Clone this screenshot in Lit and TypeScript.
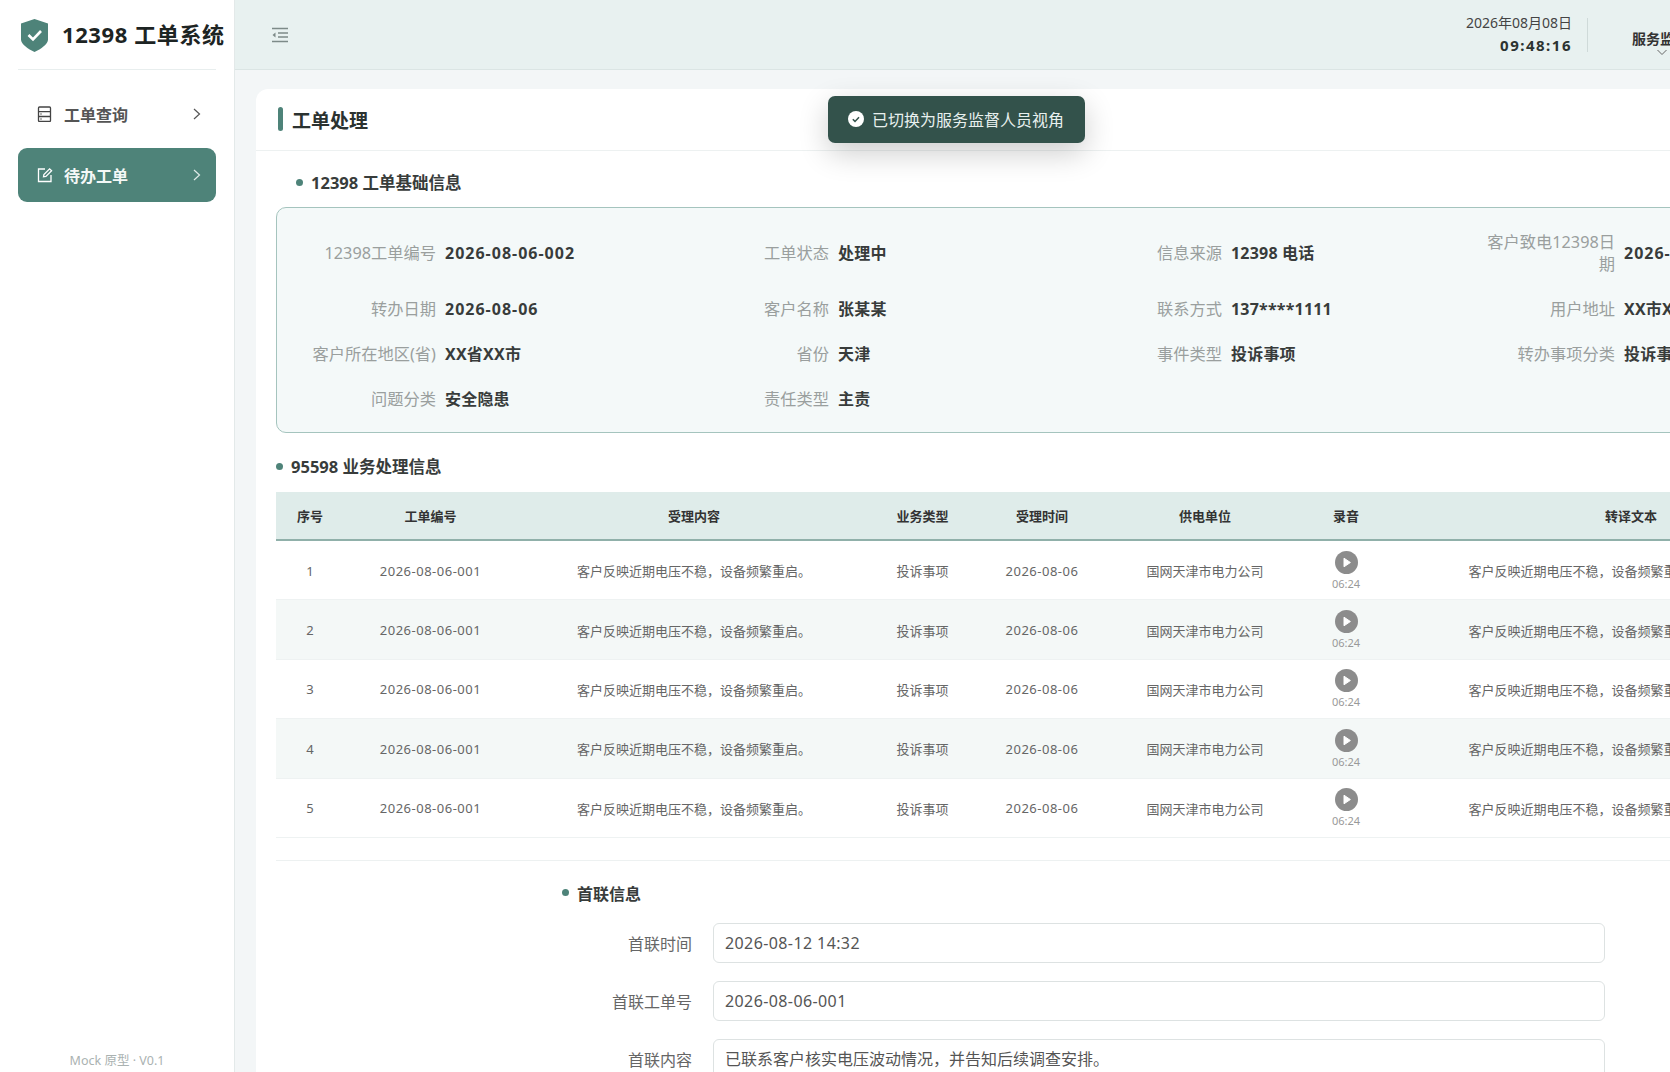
import { LitElement, html, css } from 'lit';
import { customElement } from 'lit/decorators.js';

const info = [
  ['12398工单编号', '2026-08-06-002'],
  ['工单状态', '处理中'],
  ['信息来源', '12398 电话'],
  ['客户致电12398日期', '2026-08-06'],
  ['转办日期', '2026-08-06'],
  ['客户名称', '张某某'],
  ['联系方式', '137****1111'],
  ['用户地址', 'XX市XX区XX路'],
  ['客户所在地区(省)', 'XX省XX市'],
  ['省份', '天津'],
  ['事件类型', '投诉事项'],
  ['转办事项分类', '投诉事项'],
  ['问题分类', '安全隐患'],
  ['责任类型', '主责'],
];

const columns = [
  ['序号', 68],
  ['工单编号', 173],
  ['受理内容', 354],
  ['业务类型', 103],
  ['受理时间', 136],
  ['供电单位', 190],
  ['录音', 92],
  ['转译文本', 478],
] as const;

const fields = [
  ['首联时间', '2026-08-12 14:32'],
  ['首联工单号', '2026-08-06-001'],
  ['首联内容', '已联系客户核实电压波动情况\uff0c并告知后续调查安排。'],
];

// date-like values run a little wider than the font gives
const isDate = (v: string) => /^[\d\- :]+$/.test(v);

@customElement('app-root')
export default class AppRoot extends LitElement {
  static override styles = css`
    :host {
      display: block;
      width: 1670px;
      height: 1072px;
      overflow: hidden;
      font-family: 'Noto Sans', 'Noto Sans CJK SC', sans-serif;
      color: #333;
    }
    .app {
      position: relative;
      display: flex;
      width: 1670px;
      height: 1072px;
      overflow: hidden;
      background: #f3f6f7;
    }

    .side {
      flex: none;
      box-sizing: border-box;
      display: flex;
      flex-direction: column;
      width: 235px;
      height: 1072px;
      padding: 0 18px;
      background: #fff;
      border-right: 1px solid #e3e9e9;
    }
    .brand {
      flex: none;
      display: flex;
      align-items: center;
      gap: 14px;
      height: 70px;
      margin-bottom: 18px;
      padding: 0 0 3px 3px;
      box-sizing: border-box;
      border-bottom: 1px solid #e8eeee;
      white-space: nowrap;
      font-size: 22px;
      letter-spacing: 0.6px;
      font-weight: 700;
      color: #1d2423;
    }
    .brand svg {
      flex: none;
      margin-top: 4px;
    }
    .nav {
      display: flex;
      align-items: center;
      height: 54px;
      margin-bottom: 6px;
      padding: 0 13px 2px 19px;
      box-sizing: border-box;
      border-radius: 9px;
      font-size: 16px;
      font-weight: 700;
      color: #555;
    }
    .nav.on {
      background: #4e8379;
      color: #f4f8f7;
      padding-bottom: 0;
    }
    .nav span {
      flex: 1;
      margin-left: 12px;
    }
    .nav.on span {
      margin-left: 11px;
    }
    .foot {
      margin-top: auto;
      padding-bottom: 2px;
      height: 20px;
      text-align: center;
      font-size: 12.5px;
      color: #aab2b1;
    }

    .main {
      flex: none;
      width: 1699px;
    }
    .top {
      box-sizing: border-box;
      display: flex;
      align-items: center;
      height: 70px;
      padding: 0 242px 0 36px;
      background: #e8f1f0;
      border-bottom: 1px solid #dbe5e4;
    }
    .clock {
      margin-left: auto;
      padding-bottom: 2px;
      text-align: right;
      font-size: 14px;
      line-height: 22px;
      color: #444;
    }
    .clock b {
      display: block;
      font-size: 15px;
      letter-spacing: 1.5px;
      color: #2c3331;
    }
    .sep {
      width: 1px;
      height: 34px;
      margin: 0 44px 0 15px;
      background: #cfdad9;
    }
    .user {
      width: 60px;
      padding-top: 16px;
      white-space: nowrap;
      font-size: 14px;
      line-height: 20px;
      font-weight: 700;
      color: #333;
    }
    .user svg {
      display: block;
      margin: 0 auto;
    }

    .card {
      margin: 19px 21px 0;
      background: #fff;
      border-radius: 12px 12px 0 0;
    }
    .card-head {
      display: flex;
      align-items: center;
      gap: 9px;
      height: 62px;
      padding: 0 22px;
      box-sizing: border-box;
      border-bottom: 1px solid #edf1f1;
      font-size: 19px;
      font-weight: 700;
      color: #2b3230;
    }
    .card-head i {
      width: 5px;
      height: 24px;
      margin-bottom: 2px;
      border-radius: 3px;
      background: #4e8379;
    }
    .card-body {
      padding: 18px 20px 0;
    }

    .sec {
      display: flex;
      align-items: center;
      gap: 8px;
      height: 26px;
      font-size: 16.5px;
      font-weight: 700;
      color: #383c3b;
    }
    .sec i {
      width: 7px;
      height: 7px;
      border-radius: 50%;
      background: #4e8379;
    }
    .sec.first {
      padding-left: 20px;
      margin-bottom: 12px;
    }
    .sec.second {
      margin: 20px 0 13px;
    }

    .box {
      box-sizing: border-box;
      display: grid;
      grid-template-columns: repeat(4, 393px);
      row-gap: 23px;
      align-items: center;
      height: 226px;
      padding: 23px 0 22px 28px;
      border: 1px solid #a5c4be;
      border-radius: 10px;
      background: #f4f9f9;
    }
    .kv {
      display: flex;
      align-items: center;
      gap: 9px;
      font-size: 16px;
      line-height: 22px;
    }
    .kv label {
      flex: none;
      width: 131px;
      text-align: right;
      font-size: 16.25px;
      color: #9a9f9e;
    }
    .kv b {
      white-space: nowrap;
      letter-spacing: 0.2px;
      color: #383c3b;
    }
    .kv b.num {
      letter-spacing: 1px;
    }

    table {
      width: 1594px;
      table-layout: fixed;
      border-collapse: collapse;
      font-size: 13px;
    }
    th {
      height: 47px;
      padding: 0;
      background: #dfecea;
      border-bottom: 2px solid #90b0aa;
      font-weight: 700;
      color: #333;
    }
    td {
      height: 57.4px;
      padding: 1px 0 0;
      text-align: center;
      white-space: nowrap;
      color: #666;
      border-bottom: 1px solid #eef2f2;
    }
    td .num {
      letter-spacing: 0.5px;
    }
    tr:nth-child(even) td {
      background: #f4f8f7;
    }
    .play {
      display: block;
      margin: 0 auto;
    }
    .dur {
      display: block;
      margin-top: 3px;
      padding-bottom: 1px;
      font-size: 11px;
      line-height: 13px;
      color: #999;
    }

    .rule {
      height: 1px;
      margin-top: 22px;
      background: #edf1f1;
    }
    .form {
      width: 1041px;
      margin: 19px auto 0;
    }
    .form .sec {
      margin: 0 0 17px -2px;
      font-size: 16px;
    }
    .row {
      display: flex;
      align-items: center;
      gap: 21px;
      margin-bottom: 18px;
    }
    .row label {
      flex: none;
      width: 128px;
      text-align: right;
      font-size: 16px;
      color: #666;
    }
    .input {
      box-sizing: border-box;
      flex: 1;
      height: 40px;
      padding: 0 11px;
      border: 1.5px solid #dde2e2;
      border-radius: 6px;
      background: #fff;
      font-size: 16px;
      line-height: 38px;
      color: #555;
    }
    .input.num {
      letter-spacing: 0.4px;
    }

    .toast {
      position: absolute;
      left: 828px;
      top: 96px;
      box-sizing: border-box;
      display: flex;
      align-items: center;
      gap: 8px;
      width: 257px;
      height: 47px;
      padding: 0 0 1px 20px;
      border-radius: 7px;
      background: #33524b;
      box-shadow: 0 10px 30px rgba(0, 0, 0, 0.2);
      font-size: 16px;
      color: #e8f0ee;
      white-space: nowrap;
    }
  `;

  private chevron(color: string) {
    return html`<svg width="12" height="14" viewBox="0 0 12 14" fill="none" stroke=${color} stroke-width="1.2">
      <path d="M3 2l5.5 5L3 12" />
    </svg>`;
  }

  private renderCell(i: number, rowIndex: number) {
    if (i === 0) return html`${rowIndex + 1}`;
    if (i === 1) return html`<span class="num">2026-08-06-001</span>`;
    if (i === 2) return '客户反映近期电压不稳\uff0c设备频繁重启。';
    if (i === 3) return '投诉事项';
    if (i === 4) return html`<span class="num">2026-08-06</span>`;
    if (i === 5) return '国网天津市电力公司';
    if (i === 6) {
      return html`<svg class="play" width="23" height="23" viewBox="0 0 23 23">
          <circle cx="11.5" cy="11.5" r="11.5" fill="#8c8c8c" />
          <path d="M9 7.2l6.4 4.3L9 15.8z" fill="#fff" stroke="#fff" stroke-width="1" stroke-linejoin="round" />
        </svg>
        <span class="dur">06:24</span>`;
    }
    return '客户反映近期电压不稳\uff0c设备频繁重启\uff0c请求尽快排查。';
  }

  override render() {
    return html`
      <div class="app">
        <aside class="side">
          <div class="brand">
            <svg width="27" height="33" viewBox="0 0 27 33">
              <path d="M13.5 0L27 4.5V20.5C27 25 20 30 13.5 33C7 30 0 25 0 20.5V4.5z" fill="#4e8379" />
              <path d="M7.5 16l4.5 4.5 8-8.5" fill="none" stroke="#fff" stroke-width="2.6" />
            </svg>
            12398 工单系统
          </div>
          <div class="nav">
            <svg width="15" height="16" viewBox="0 0 15 16" fill="none" stroke="#444" stroke-width="1.3">
              <rect x="1.5" y="1" width="12" height="14.5" rx="1" />
              <path d="M1.5 5.7h12M1.5 10.5h12M3.5 8h1M3.5 13h1" />
            </svg>
            <span>工单查询</span>
            ${this.chevron('#555')}
          </div>
          <div class="nav on">
            <svg width="16" height="16" viewBox="0 0 16 16" fill="none" stroke="#fff" stroke-width="1.3">
              <path d="M8 2H1.5v12.5H14V8" />
              <path d="M6.5 9.8l.4-2.3L12.6 1.8l2 2-5.7 5.6z" />
            </svg>
            <span>待办工单</span>
            ${this.chevron('#dfeae8')}
          </div>
          <div class="foot">Mock 原型 · V0.1</div>
        </aside>

        <div class="main">
          <header class="top">
            <svg width="18" height="16" viewBox="0 0 18 16" fill="none" stroke="#7d8a88" stroke-width="1.4">
              <path d="M1 1.5h16M7 6h10M7 10h10M1 14.5h16" />
              <path d="M4.5 5.5L1.5 8l3 2.5z" fill="#7d8a88" stroke="none" />
            </svg>
            <div class="clock">2026年08月08日<b>09:48:16</b></div>
            <div class="sep"></div>
            <div class="user">
              服务监督人员
              <svg width="12" height="7" viewBox="0 0 12 7" fill="none" stroke="#666" stroke-width="1">
                <path d="M1.5 1l4.5 4.5L10.5 1" />
              </svg>
            </div>
          </header>

          <section class="card">
            <div class="card-head"><i></i>工单处理</div>
            <div class="card-body">
              <div class="sec first"><i></i>12398 工单基础信息</div>
              <div class="box">
                ${info.map(
                  ([k, v]) =>
                    html`<div class="kv"><label>${k}</label><b class=${isDate(v) ? 'num' : ''}>${v}</b></div>`,
                )}
              </div>

              <div class="sec second"><i></i>95598 业务处理信息</div>
              <table>
                <colgroup>${columns.map(([, w]) => html`<col style="width:${w}px" />`)}</colgroup>
                <thead>
                  <tr>${columns.map(([name]) => html`<th>${name}</th>`)}</tr>
                </thead>
                <tbody>
                  ${[0, 1, 2, 3, 4].map(
                    (r) => html`<tr>${columns.map((_, i) => html`<td>${this.renderCell(i, r)}</td>`)}</tr>`,
                  )}
                </tbody>
              </table>

              <div class="rule"></div>

              <div class="form">
                <div class="sec"><i></i>首联信息</div>
                ${fields.map(
                  ([k, v]) =>
                    html`<div class="row">
                      <label>${k}</label>
                      <div class="input ${isDate(v) ? 'num' : ''}">${v}</div>
                    </div>`,
                )}
              </div>
            </div>
          </section>
        </div>

        <div class="toast">
          <svg width="16" height="16" viewBox="0 0 16 16">
            <circle cx="8" cy="8" r="8" fill="#fff" />
            <path d="M4.8 8.2l2.2 2.2 4-4.2" fill="none" stroke="#33524b" stroke-width="1.5" />
          </svg>
          已切换为服务监督人员视角
        </div>
      </div>
    `;
  }
}
